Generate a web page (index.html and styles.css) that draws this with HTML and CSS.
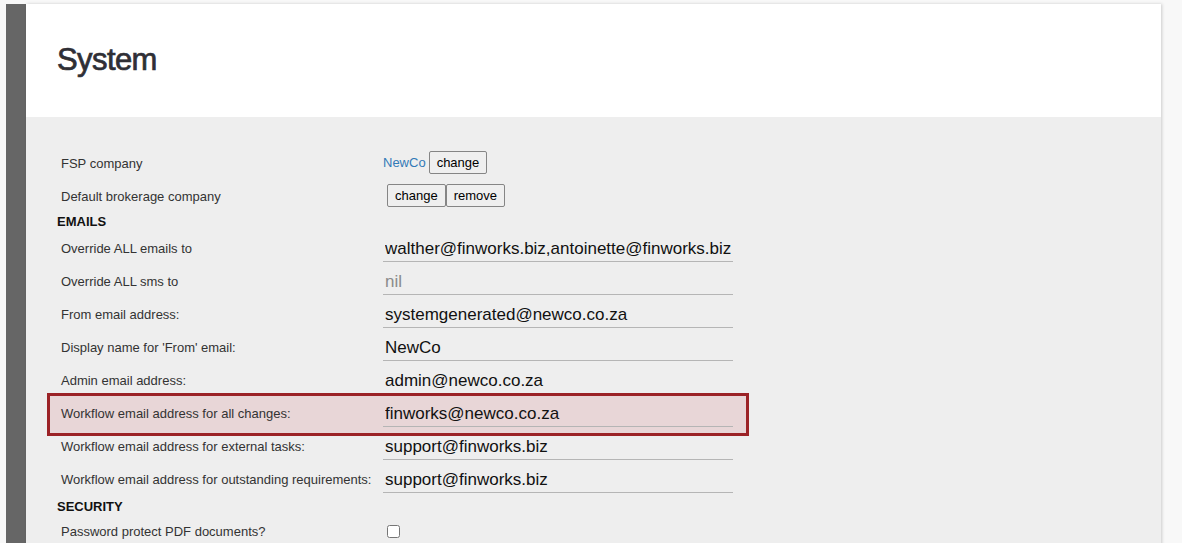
FILE: index.html
```html
<!DOCTYPE html>
<html>
<head>
<meta charset="utf-8">
<title>System</title>
<link rel="stylesheet" href="styles.css">
</head>
<body>
<div class="frame">
  <div class="sidebar"></div>
  <main class="card">
    <header class="card-head">
      <h1 class="title">System</h1>
    </header>
    <section class="settings">
      <div class="row row-plain">
        <div class="label">FSP company</div>
        <div class="value"><a class="link" href="#">NewCo</a> <button class="btn">change</button></div>
      </div>
      <div class="row row-plain">
        <div class="label">Default brokerage company</div>
        <div class="value value-indent"><button class="btn">change</button><button class="btn">remove</button></div>
      </div>
      <div class="group">EMAILS</div>
      <div class="row">
        <div class="label">Override ALL emails to</div>
        <div class="value"><input class="field" type="text" value="walther@finworks.biz,antoinette@finworks.biz"></div>
      </div>
      <div class="row">
        <div class="label">Override ALL sms to</div>
        <div class="value"><input class="field" type="text" placeholder="nil"></div>
      </div>
      <div class="row">
        <div class="label">From email address:</div>
        <div class="value"><input class="field" type="text" value="systemgenerated@newco.co.za"></div>
      </div>
      <div class="row">
        <div class="label">Display name for 'From' email:</div>
        <div class="value"><input class="field" type="text" value="NewCo"></div>
      </div>
      <div class="row">
        <div class="label">Admin email address:</div>
        <div class="value"><input class="field" type="text" value="admin@newco.co.za"></div>
      </div>
      <div class="row row-highlight">
        <div class="label">Workflow email address for all changes:</div>
        <div class="value"><input class="field" type="text" value="finworks@newco.co.za"></div>
      </div>
      <div class="row">
        <div class="label">Workflow email address for external tasks:</div>
        <div class="value"><input class="field" type="text" value="support@finworks.biz"></div>
      </div>
      <div class="row">
        <div class="label">Workflow email address for outstanding requirements:</div>
        <div class="value"><input class="field" type="text" value="support@finworks.biz"></div>
      </div>
      <div class="group group-security">SECURITY</div>
      <div class="row row-check">
        <div class="label">Password protect PDF documents?</div>
        <div class="value"><input class="check" type="checkbox"></div>
      </div>
    </section>
  </main>
</div>
</body>
</html>
```
FILE: styles.css
```css
html, body {
  margin: 0;
  padding: 0;
}
body {
  background: #f8f8f8;
  font-family: "Liberation Sans", Arial, sans-serif;
  color: #333;
  overflow: hidden;
  height: 543px;
}
.frame {
  display: flex;
  padding: 4px 0 0 6px;
  border-top: 3px solid #ededed;
  margin-top: -3px;
}
.sidebar {
  width: 20px;
  background: #666;
  flex: none;
}
.card {
  width: 1135px;
  flex: none;
  background: #eee;
  box-shadow: 1px 0 3px rgba(0, 0, 0, 0.18);
  min-height: 560px;
}
.card-head {
  background: #fff;
  height: 113px;
  padding: 0 0 0 31px;
  box-sizing: border-box;
  display: flex;
  align-items: flex-start;
}
.title {
  margin: 38px 0 0 0;
  font-size: 31px;
  font-weight: normal;
  letter-spacing: -0.6px;
  line-height: 36px;
  color: #2f2f35;
  -webkit-text-stroke: 0.7px #2f2f35;
}
.settings {
  padding: 29px 0 0 31px;
}
.row {
  display: grid;
  grid-template-columns: 326px 350px;
  align-items: center;
  height: 33px;
  width: 676px;
  font-size: 13px;
}
.label {
  padding-left: 4px;
  padding-top: 1px;
  color: #333;
}
.value {
  display: flex;
  align-items: center;
}
.value-indent {
  padding-left: 4px;
}
.link {
  color: #337ab7;
  text-decoration: none;
  font-size: 13px;
  margin-right: 3px;
}
.btn {
  font-family: "Liberation Sans", Arial, sans-serif;
  font-size: 13px;
  color: #000;
  background: #efefef;
  border: 1px solid #858585;
  border-radius: 2px;
  padding: 3px 7px;
  height: 23px;
  line-height: 15px;
  margin: 0;
}
.field {
  width: 350px;
  height: 29px;
  box-sizing: border-box;
  border: none;
  border-bottom: 1px solid #b5b5b5;
  background: transparent;
  font-family: "Liberation Sans", Arial, sans-serif;
  font-size: 17px;
  color: #111;
  padding: 3px 2px 0 2px;
  margin: 0;
  outline: none;
}
.field::placeholder {
  color: #8a8a8a;
}
.group {
  font-size: 13px;
  font-weight: bold;
  color: #111;
  height: 19px;
  line-height: 19px;
}
.group-security {
  height: 22px;
  line-height: 23px;
}
.row-check {
  height: 28px;
}
.check {
  width: 13px;
  height: 13px;
  margin: 3px 3px 3px 4px;
}
.row-highlight {
  position: relative;
}
.row-highlight::before {
  content: "";
  position: absolute;
  top: -3px;
  bottom: -7px;
  left: -10px;
  right: -16px;
  border: 3px solid #9b2226;
  background: #e8d6d7;
  z-index: 0;
}
.row-highlight > * {
  position: relative;
  z-index: 1;
}
```
